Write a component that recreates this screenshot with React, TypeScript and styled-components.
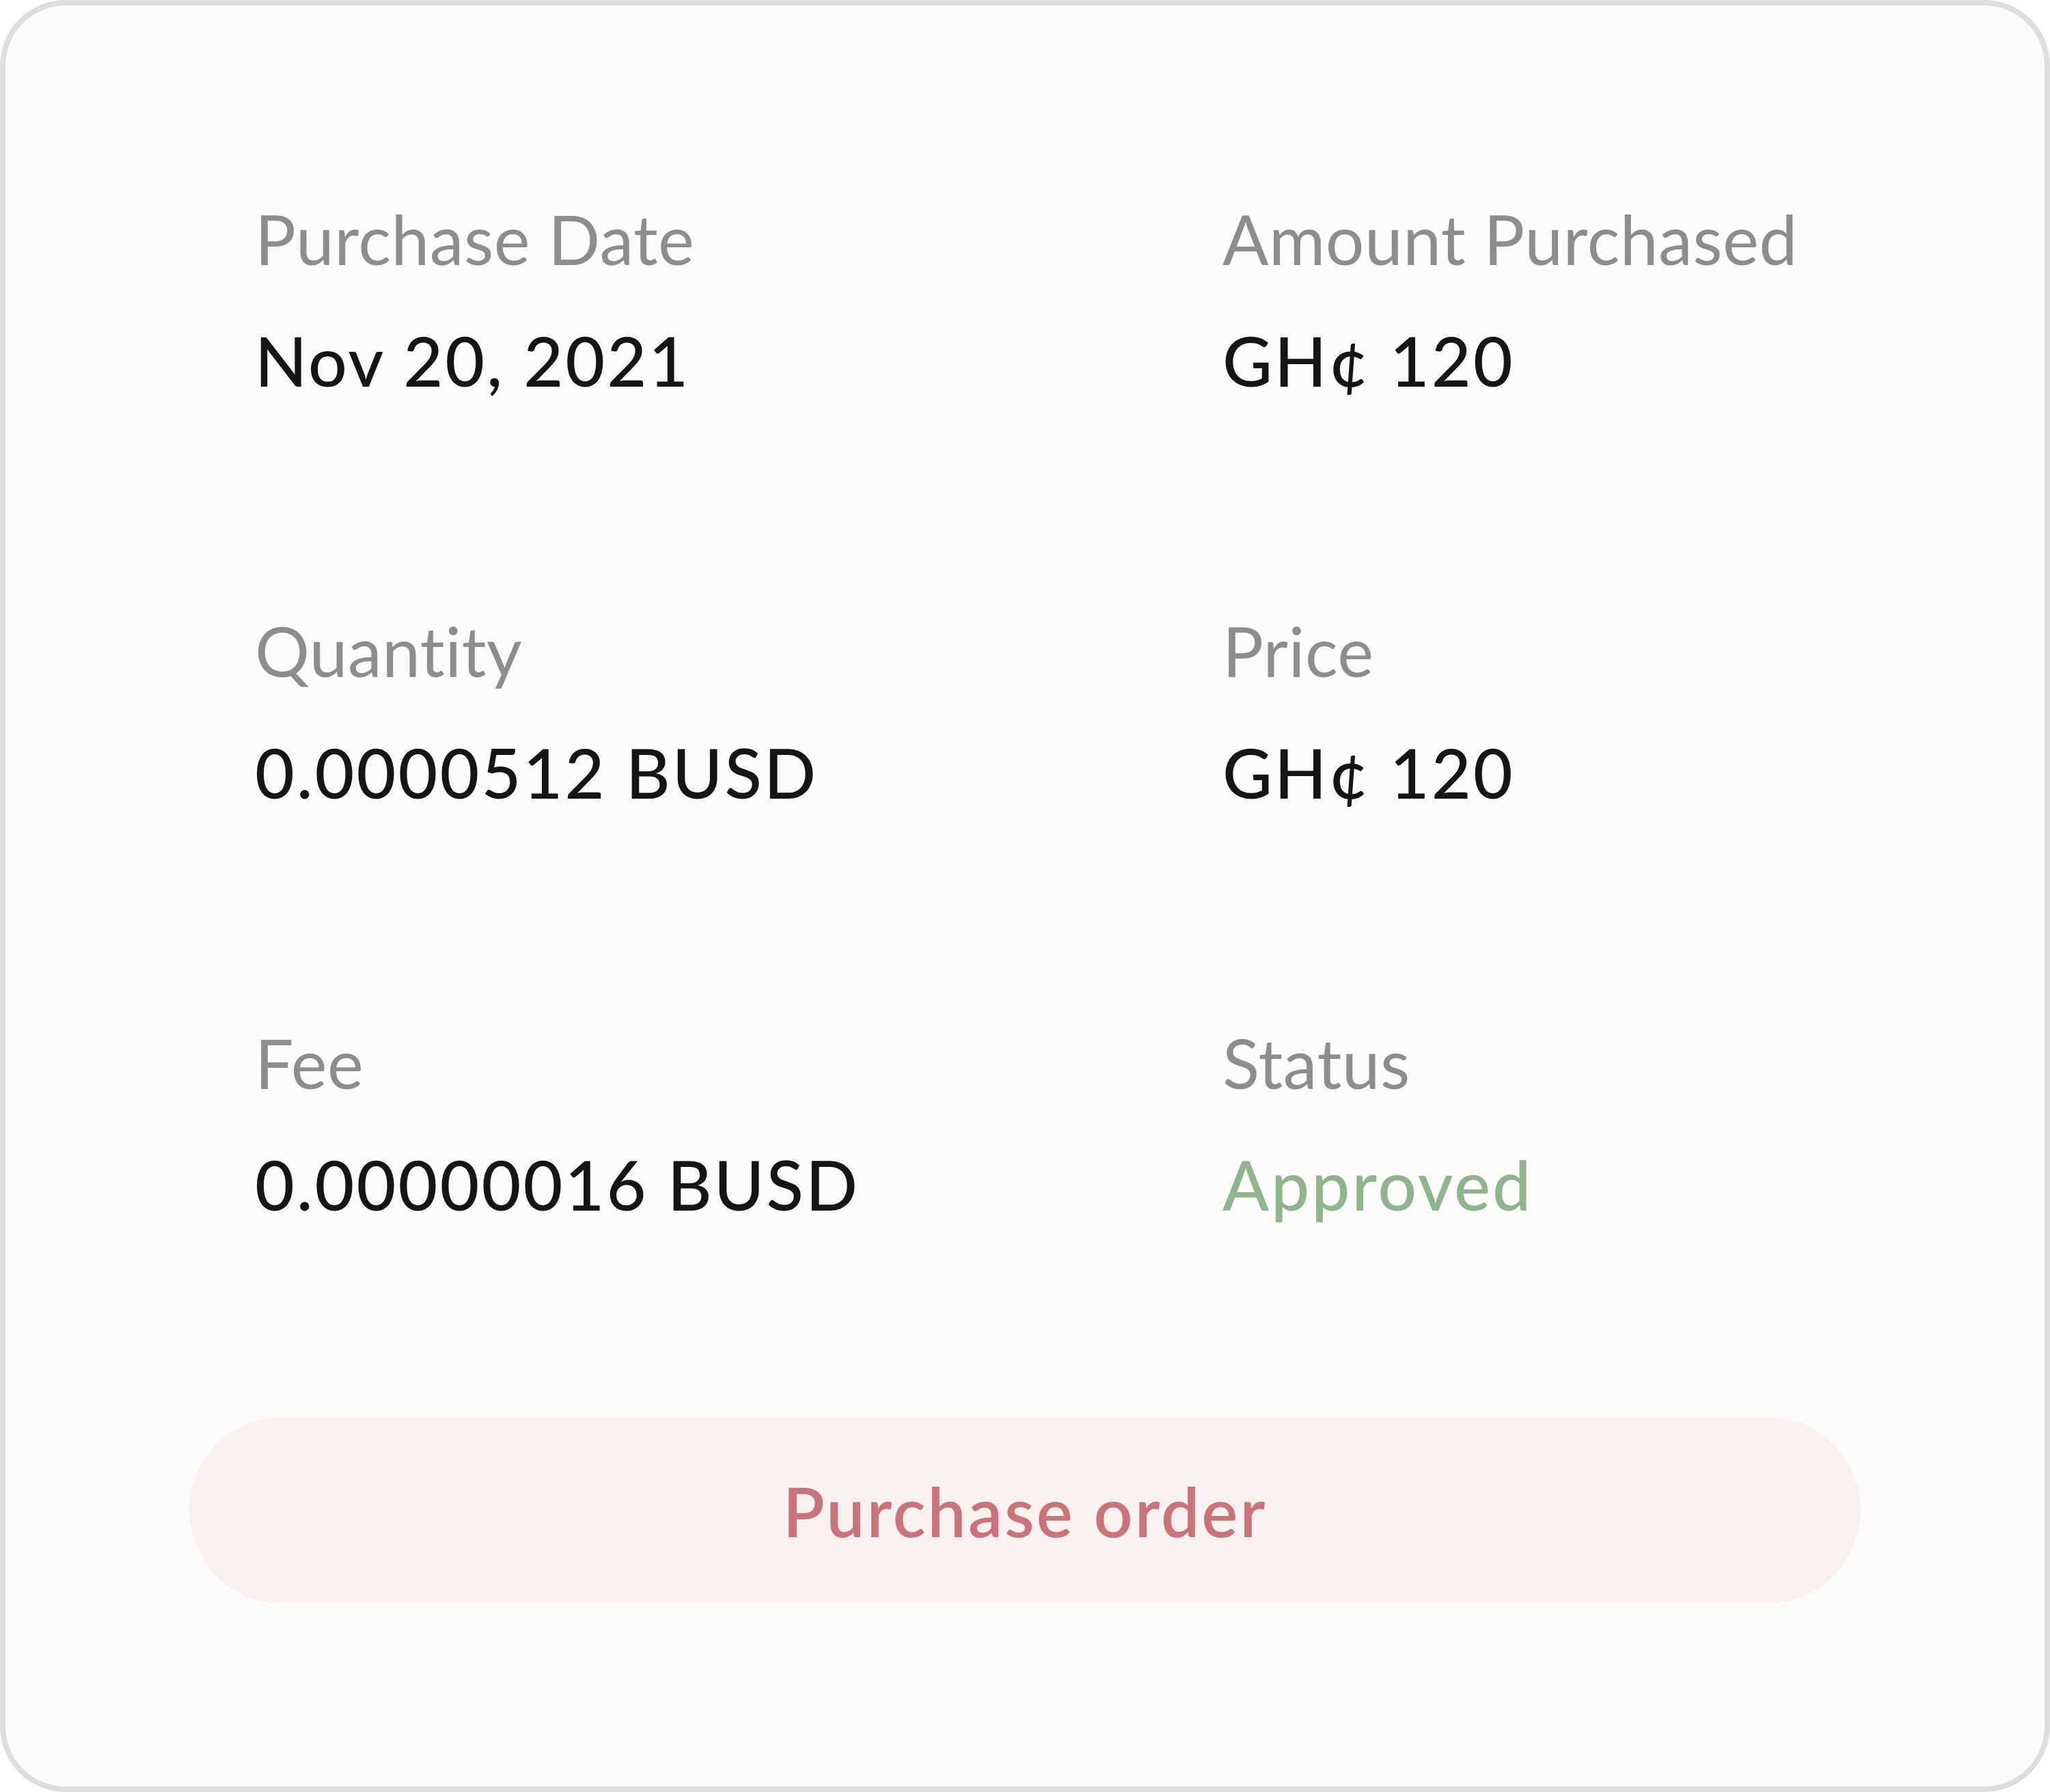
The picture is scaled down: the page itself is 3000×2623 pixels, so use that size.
import React from "react";
import styled, { createGlobalStyle } from "styled-components";

const Global = createGlobalStyle`
  html, body { margin: 0; padding: 0; background: #ffffff; }
  * { box-sizing: border-box; }
`;

const Card = styled.div`
  width: 3000px;
  height: 2623px;
  border: 8px solid #dedede;
  border-radius: 96px;
  background: #fefbfb;
  padding: 281px 269px 0;
  display: flex;
  flex-direction: column;
  font-family: Lato, "Open Sans", sans-serif;
`;

const Grid = styled.div`
  display: grid;
  grid-template-columns: 1416px 1fr;
  row-gap: 305px;
  padding-left: 96px;
`;

const Field = styled.div`
  display: flex;
  flex-direction: column;
  gap: 58px;
`;

const Label = styled.div`
  font-size: 100px;
  line-height: 120px;
  color: #8d8d8d;
  font-weight: 400;
  letter-spacing: 0.5px;
`;

const Value = styled.div<{ $tone?: "ok" }>`
  font-size: 100px;
  line-height: 120px;
  font-weight: 500;
  letter-spacing: 3px;
  color: ${(p) => (p.$tone === "ok" ? "#8fb48f" : "#151515")};
`;

const Button = styled.button`
  margin-top: 281px;
  height: 273px;
  width: 100%;
  border: none;
  border-radius: 137px;
  background: #fbf0f0;
  color: #c9737a;
  font-family: Lato, "Open Sans", sans-serif;
  font-size: 100px;
  font-weight: 600;
  letter-spacing: 3px;
  cursor: pointer;
`;

const fields: { label: string; value: string; tone?: "ok" }[] = [
  { label: "Purchase Date", value: "Nov 20, 2021" },
  { label: "Amount Purchased", value: "GH¢ 120" },
  { label: "Quantity", value: "0.0000512 BUSD" },
  { label: "Price", value: "GH¢ 120" },
  { label: "Fee", value: "0.00000016 BUSD" },
  { label: "Status", value: "Approved", tone: "ok" },
];

export default function App() {
  return (
    <>
      <Global />
      <Card>
        <Grid>
          {fields.map((f) => (
            <Field key={f.label}>
              <Label>{f.label}</Label>
              <Value $tone={f.tone}>{f.value}</Value>
            </Field>
          ))}
        </Grid>
        <Button>Purchase order</Button>
      </Card>
    </>
  );
}
